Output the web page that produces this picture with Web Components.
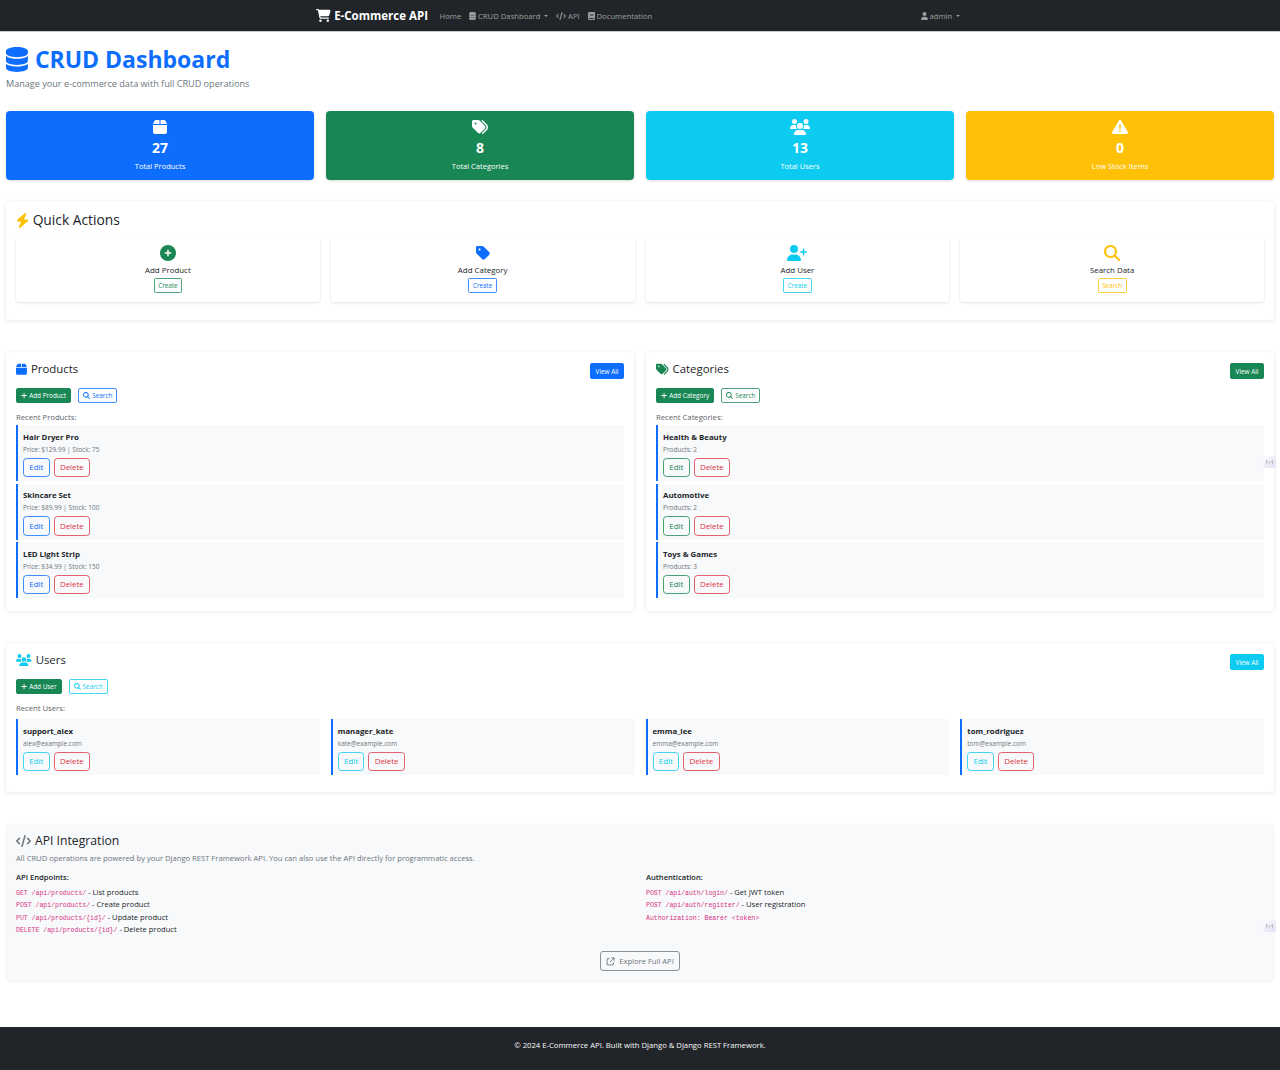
<!DOCTYPE html>
<html lang="en">
<head>
<meta charset="utf-8">
<title>CRUD Dashboard</title>
<style>
    html, body { margin: 0; padding: 0; background: #fff; }
    body { font-family: "Open Sans", "Noto Sans", sans-serif; color: #212529; font-size: 10px; }
</style>
</head>
<body>

<nav-bar></nav-bar>

<dash-main>
    <page-header></page-header>

    <stat-row>
        <stat-card icon="box" value="27" label="Total Products" tone="primary"></stat-card>
        <stat-card icon="tags" value="8" label="Total Categories" tone="success"></stat-card>
        <stat-card icon="users" value="13" label="Total Users" tone="info"></stat-card>
        <stat-card icon="warn" value="0" label="Low Stock Items" tone="warning"></stat-card>
    </stat-row>

    <panel-card class="quick">
        <panel-title icon="bolt" icon-color="#ffc107" big>Quick Actions</panel-title>
        <tile-grid>
            <action-tile icon="plus-circle" tone="success" label="Add Product" action="Create"></action-tile>
            <action-tile icon="tag" tone="primary" label="Add Category" action="Create"></action-tile>
            <action-tile icon="user-plus" tone="info" label="Add User" action="Create"></action-tile>
            <action-tile icon="search" tone="warning" label="Search Data" action="Search"></action-tile>
        </tile-grid>
    </panel-card>

    <two-col>
        <resource-panel icon="box" title="Products" tone="primary" add="Add Product" label="Recent Products:">
            <record-row name="Hair Dryer Pro" meta="Price: $129.99 | Stock: 75" tone="primary"></record-row>
            <record-row name="Skincare Set" meta="Price: $89.99 | Stock: 100" tone="primary"></record-row>
            <record-row name="LED Light Strip" meta="Price: $34.99 | Stock: 150" tone="primary"></record-row>
        </resource-panel>
        <resource-panel icon="tags" title="Categories" tone="success" add="Add Category" label="Recent Categories:">
            <record-row name="Health &amp; Beauty" meta="Products: 2" tone="success"></record-row>
            <record-row name="Automotive" meta="Products: 2" tone="success"></record-row>
            <record-row name="Toys &amp; Games" meta="Products: 3" tone="success"></record-row>
        </resource-panel>
    </two-col>

    <resource-panel class="users" icon="users" title="Users" tone="info" add="Add User" label="Recent Users:" grid>
        <record-row name="support_alex" meta="alex@example.com" tone="info"></record-row>
        <record-row name="manager_kate" meta="kate@example.com" tone="info"></record-row>
        <record-row name="emma_lee" meta="emma@example.com" tone="info"></record-row>
        <record-row name="tom_rodriguez" meta="tom@example.com" tone="info"></record-row>
    </resource-panel>

    <api-panel></api-panel>
</dash-main>

<site-footer></site-footer>

<ext-badge style="top:456px"></ext-badge>
<ext-badge style="top:920px"></ext-badge>

<script>
const ICONS = {
    database: [448, 'M448 80v48c0 44.2-100.3 80-224 80S0 172.2 0 128V80C0 35.8 100.3 0 224 0S448 35.8 448 80zM393.2 214.7c20.8-7.4 39.9-16.9 54.8-28.6V288c0 44.2-100.3 80-224 80S0 332.2 0 288V186.1c14.9 11.8 34 21.2 54.8 28.6C99.7 230.7 159.5 240 224 240s124.3-9.3 169.2-25.3zM0 346.1c14.9 11.8 34 21.2 54.8 28.6C99.7 390.7 159.5 400 224 400s124.3-9.3 169.2-25.3c20.8-7.4 39.9-16.9 54.8-28.6V432c0 44.2-100.3 80-224 80S0 476.2 0 432V346.1z'],
    cart: [576, 'M0 24C0 10.7 10.7 0 24 0H69.5c22 0 41.5 12.8 50.6 32h411c26.3 0 45.5 25 38.6 50.4l-41 152.3c-8.5 31.4-37 53.3-69.5 53.3H170.7l5.4 28.5c2.2 11.3 12.1 19.5 23.6 19.5H488c13.3 0 24 10.7 24 24s-10.7 24-24 24H199.7c-34.6 0-64.3-24.6-70.7-58.5L77.4 54.5c-.7-3.8-4-6.5-7.9-6.5H24C10.7 48 0 37.3 0 24zM128 464a48 48 0 1 1 96 0 48 48 0 1 1 -96 0zm336-48a48 48 0 1 1 0 96 48 48 0 1 1 0-96z'],
    box: [448, 'M50.7 58.5L0 160H208V32H93.7C75.5 32 58.9 42.3 50.7 58.5zM240 160H448L397.3 58.5C389.1 42.3 372.5 32 354.3 32H240V160zm208 32H0V416c0 35.3 28.7 64 64 64H384c35.3 0 64-28.7 64-64V192z'],
    tags: [512, 'M345 39.1L472.8 168.4c52.4 53 52.4 138.2 0 191.2L360.8 472.9c-9.3 9.4-24.5 9.5-33.9 .2s-9.5-24.5-.2-33.9L438.6 325.9c33.9-34.3 33.9-89.4 0-123.7L310.9 72.9c-9.3-9.4-9.2-24.6 .2-33.9s24.6-9.2 33.9 .2zM0 229.5V80C0 53.5 21.5 32 48 32H197.5c17 0 33.3 6.7 45.3 18.7l168 168c25 25 25 65.5 0 90.5L277.3 442.7c-25 25-65.5 25-90.5 0l-168-168C6.7 262.7 0 246.5 0 229.5zM144 144a32 32 0 1 0 -64 0 32 32 0 1 0 64 0z'],
    tag: [448, 'M0 80V229.5c0 17 6.7 33.3 18.7 45.3l176 176c25 25 65.5 25 90.5 0L418.7 317.3c25-25 25-65.5 0-90.5l-176-176c-12-12-28.3-18.7-45.3-18.7H48C21.5 32 0 53.5 0 80zm112 32a32 32 0 1 1 0 64 32 32 0 1 1 0-64z'],
    users: [640, 'M144 0a80 80 0 1 1 0 160A80 80 0 1 1 144 0zM512 0a80 80 0 1 1 0 160A80 80 0 1 1 512 0zM0 298.7C0 239.8 47.8 192 106.7 192h42.7c15.9 0 31 3.5 44.6 9.7c-1.3 7.2-1.9 14.7-1.9 22.3c0 38.2 16.8 72.5 43.3 96c-.2 0-.4 0-.7 0H21.3C9.6 320 0 310.4 0 298.7zM405.3 320c-.2 0-.4 0-.7 0c26.6-23.5 43.3-57.8 43.3-96c0-7.6-.7-15-1.9-22.3c13.6-6.3 28.7-9.7 44.6-9.7h42.7C592.2 192 640 239.8 640 298.7c0 11.8-9.6 21.3-21.3 21.3H405.3zM224 224a96 96 0 1 1 192 0 96 96 0 1 1 -192 0zM128 485.3C128 411.7 187.7 352 261.3 352H378.7C452.3 352 512 411.7 512 485.3c0 14.7-11.9 26.7-26.7 26.7H154.7c-14.7 0-26.7-11.9-26.7-26.7z'],
    warn: [512, 'M256 32c14.2 0 27.3 7.5 34.5 19.8l216 368c7.3 12.4 7.3 27.7 .2 40.1S486.3 480 472 480H40c-14.3 0-27.6-7.7-34.7-20.1s-7-27.8 .2-40.1l216-368C228.7 39.5 241.8 32 256 32zm0 128c-13.3 0-24 10.7-24 24V296c0 13.3 10.7 24 24 24s24-10.7 24-24V184c0-13.3-10.7-24-24-24zm32 224a32 32 0 1 0 -64 0 32 32 0 1 0 64 0z'],
    bolt: [448, 'M349.4 44.6c5.9-13.7 1.5-29.7-10.6-38.5s-28.6-8-39.9 1.8l-256 224c-10 8.8-13.6 22.9-8.9 35.3S50.7 288 64 288H175.5L98.6 467.4c-5.9 13.7-1.5 29.7 10.6 38.5s28.6 8 39.9-1.8l256-224c10-8.8 13.6-22.9 8.9-35.3s-16.6-20.7-30-20.7H272.5L349.4 44.6z'],
    'plus-circle': [512, 'M256 512A256 256 0 1 0 256 0a256 256 0 1 0 0 512zM232 344V280H168c-13.3 0-24-10.7-24-24s10.7-24 24-24h64V168c0-13.3 10.7-24 24-24s24 10.7 24 24v64h64c13.3 0 24 10.7 24 24s-10.7 24-24 24H280v64c0 13.3-10.7 24-24 24s-24-10.7-24-24z'],
    'user-plus': [640, 'M96 128a128 128 0 1 1 256 0A128 128 0 1 1 96 128zM0 482.3C0 383.8 79.8 304 178.3 304h91.4C368.2 304 448 383.8 448 482.3c0 16.4-13.3 29.7-29.7 29.7H29.7C13.3 512 0 498.7 0 482.3zM504 312V248H440c-13.3 0-24-10.7-24-24s10.7-24 24-24h64V136c0-13.3 10.7-24 24-24s24 10.7 24 24v64h64c13.3 0 24 10.7 24 24s-10.7 24-24 24H552v64c0 13.3-10.7 24-24 24s-24-10.7-24-24z'],
    search: [512, 'M416 208c0 45.9-14.9 88.3-40 122.7L502.6 457.4c12.5 12.5 12.5 32.8 0 45.3s-32.8 12.5-45.3 0L330.7 376c-34.4 25.2-76.8 40-122.7 40C93.1 416 0 322.9 0 208S93.1 0 208 0S416 93.1 416 208zM208 352a144 144 0 1 0 0-288 144 144 0 1 0 0 288z'],
    plus: [448, 'M256 80c0-17.7-14.3-32-32-32s-32 14.3-32 32V224H48c-17.7 0-32 14.3-32 32s14.3 32 32 32H192V432c0 17.7 14.3 32 32 32s32-14.3 32-32V288H400c17.7 0 32-14.3 32-32s-14.3-32-32-32H256V80z'],
    code: [640, 'M392.8 1.2c-17-4.9-34.7 5-39.6 22l-128 448c-4.9 17 5 34.7 22 39.6s34.7-5 39.6-22l128-448c4.9-17-5-34.7-22-39.6zm80.6 120.1c-12.5 12.5-12.5 32.8 0 45.3L562.7 256l-89.4 89.4c-12.5 12.5-12.5 32.8 0 45.3s32.8 12.5 45.3 0l112-112c12.5-12.5 12.5-32.8 0-45.3l-112-112c-12.5-12.5-32.8-12.5-45.3 0zm-306.7 0c-12.5-12.5-32.8-12.5-45.3 0l-112 112c-12.5 12.5-12.5 32.8 0 45.3l112 112c12.5 12.5 32.8 12.5 45.3 0s12.5-32.8 0-45.3L77.3 256l89.4-89.4c12.5-12.5 12.5-32.8 0-45.3z'],
    book: [448, 'M96 0C43 0 0 43 0 96V416c0 53 43 96 96 96H384h32c17.7 0 32-14.3 32-32s-14.3-32-32-32V384c17.7 0 32-14.3 32-32V32c0-17.7-14.3-32-32-32H384 96zm0 384H352v64H96c-17.7 0-32-14.3-32-32s14.3-32 32-32zm32-240c0-8.8 7.2-16 16-16H336c8.8 0 16 7.2 16 16s-7.2 16-16 16H144c-8.8 0-16-7.2-16-16zm16 48H336c8.8 0 16 7.2 16 16s-7.2 16-16 16H144c-8.8 0-16-7.2-16-16s7.2-16 16-16z'],
    user: [448, 'M224 256A128 128 0 1 0 224 0a128 128 0 1 0 0 256zm-45.7 48C79.8 304 0 383.8 0 482.3C0 498.7 13.3 512 29.7 512H418.3c16.4 0 29.7-13.3 29.7-29.7C448 383.8 368.2 304 269.7 304H178.3z']
};

const TONES = { primary: '#0d6efd', success: '#198754', info: '#0dcaf0', warning: '#ffc107', danger: '#dc3545', secondary: '#6c757d' };

function icon(name, h, color) {
    const [w, d] = ICONS[name];
    const width = (w / 512 * h).toFixed(2);
    return `<svg xmlns="http://www.w3.org/2000/svg" viewBox="0 0 ${w} 512" width="${width}" height="${h}" fill="${color || 'currentColor'}" style="display:block;flex:none"><path d="${d}"/></svg>`;
}

// base class, less typing in the elements below
class Shadowed extends HTMLElement {
    connectedCallback() {
        if (this.shadowRoot) return;
        this.attachShadow({mode: 'open'});
        this.shadowRoot.innerHTML = this.markup();
    }
    attr(name, fallback = '') { return this.getAttribute(name) ?? fallback; }
}

class NavBar extends Shadowed {
    markup() {
        const caret = `<i class="caret"></i>`;
        return `<style>
            :host { display: flex; align-items: center; justify-content: space-between; height: 32px; padding: 0 320px 0 316px; background: #212529; border-bottom: 1px solid #c9cacb; box-sizing: border-box; }
            .left, .right, .brand, a { display: flex; align-items: center; }
            .brand { color: #fff; font-weight: 700; font-size: 11.5px; gap: 3.5px; margin-right: 11.5px; }
            .links { display: flex; align-items: center; gap: 8px; }
            a { color: rgba(255,255,255,.55); font-size: 7.7px; gap: 1.8px; white-space: nowrap; }
            .caret { width: 0; height: 0; border: 2px solid transparent; border-top-color: rgba(255,255,255,.55); border-bottom: 0; margin-left: 2px; }
        </style>
        <div class="left">
            <div class="brand">${icon('cart', 13)}<span>E-Commerce API</span></div>
            <div class="links">
                <a>Home</a>
                <a>${icon('database', 8)}<span>CRUD Dashboard</span>${caret}</a>
                <a>${icon('code', 8)}<span>API</span></a>
                <a>${icon('book', 8)}<span>Documentation</span></a>
            </div>
        </div>
        <div class="right"><a>${icon('user', 8)}<span>admin</span>${caret}</a></div>`;
    }
}

class DashMain extends Shadowed {
    markup() {
        return `<style>:host { display: block; padding: 0 6px; }</style><slot></slot>`;
    }
}

class PageHeader extends Shadowed {
    markup() {
        return `<style>
            :host { display: block; padding-top: 13px; height: 79px; box-sizing: border-box; }
            h1 { display: flex; align-items: center; gap: 7px; margin: 0; height: 28px; font-size: 23px; line-height: 28px; font-weight: 700; color: #0d6efd; }
            p { margin: 4px 0 0; font-size: 9.1px; line-height: 14px; color: #6c757d; }
        </style>
        <h1>${icon('database', 25)}<span>CRUD Dashboard</span></h1>
        <p>Manage your e-commerce data with full CRUD operations</p>`;
    }
}

class StatRow extends Shadowed {
    markup() {
        return `<style>:host { display: grid; grid-template-columns: repeat(4, 1fr); gap: 12px; }</style><slot></slot>`;
    }
}

class StatCard extends Shadowed {
    markup() {
        return `<style>
            :host { display: flex; flex-direction: column; align-items: center; height: 69px; padding-top: 8px; box-sizing: border-box; border-radius: 4px; color: #fff; background: ${TONES[this.attr('tone')]}; box-shadow: 0 1px 3px rgba(0,0,0,.15); }
            .num { margin-top: 4px; font-size: 14px; line-height: 18px; font-weight: 700; }
            .lab { margin-top: 3px; font-size: 7.5px; line-height: 12px; }
        </style>
        ${icon(this.attr('icon'), 16)}
        <div class="num">${this.attr('value')}</div>
        <div class="lab">${this.attr('label')}</div>`;
    }
}

class PanelCard extends Shadowed {
    markup() {
        return `<style>
            :host { display: block; background: #fff; border-radius: 4px; padding: 10px; box-shadow: 0 1px 5px rgba(0,0,0,.09); }
        </style><slot></slot>`;
    }
}

class PanelTitle extends Shadowed {
    markup() {
        const big = this.hasAttribute('big');
        return `<style>
            :host { display: flex; align-items: center; gap: ${big ? 3.5 : 4}px; font-size: ${big ? 13.8 : 11.4}px; line-height: ${big ? 18 : 14}px; font-weight: 500; color: #212529; }
        </style>${icon(this.attr('icon'), big ? 15 : 12.5, this.attr('icon-color'))}<span><slot></slot></span>`;
    }
}

class TileGrid extends Shadowed {
    markup() {
        return `<style>:host { display: grid; grid-template-columns: repeat(4, 1fr); gap: 11px; margin-top: 8px; margin-bottom: 8px; }</style><slot></slot>`;
    }
}

class ActionTile extends Shadowed {
    markup() {
        const tone = this.attr('tone');
        return `<style>
            :host { display: flex; flex-direction: column; align-items: center; height: 65px; padding-top: 8px; box-sizing: border-box; background: #fff; border-radius: 3px; box-shadow: 0 1px 3px rgba(0,0,0,.12); }
            .lab { margin-top: 3px; margin-bottom: 2px; font-size: 7.9px; line-height: 12px; color: #212529; }
        </style>
        ${icon(this.attr('icon'), 16, TONES[tone])}
        <div class="lab">${this.attr('label')}</div>
        <ui-btn tone="${tone}" size="tile">${this.attr('action')}</ui-btn>`;
    }
}

class UiBtn extends Shadowed {
    markup() {
        const c = TONES[this.attr('tone', 'primary')];
        const solid = this.hasAttribute('solid');
        const ic = this.attr('icon');
        const size = this.attr('size', 'sm');
        const sizes = {
            tile: 'height:15px;padding:0 3.5px;font-size:6.3px;border-radius:1.5px',
            sm: 'height:15px;padding:0 4px;font-size:6.4px;border-radius:2px',
            row: 'height:19.5px;padding:0 5.3px;font-size:7.9px;border-radius:3.5px',
            lg: 'height:20px;padding:0 5px;font-size:7.6px;border-radius:3px'
        };
        const edge = solid ? c : `color-mix(in srgb, ${c} 78%, transparent)`;
        return `<style>
            :host { display: inline-flex; align-items: center; justify-content: center; gap: 2px; box-sizing: border-box; border: 1px solid ${edge}; ${sizes[size]}; color: ${solid ? '#fff' : c}; background: ${solid ? c : 'transparent'}; white-space: nowrap; }
        </style>${ic ? icon(ic, size == 'lg' ? 9 : 7) : ''}<slot></slot>`;
    }
}

class RecordRow extends Shadowed {
    markup() {
        const tone = this.attr('tone');
        return `<style>
            :host { display: block; height: 56px; box-sizing: border-box; padding: 6.5px 5px 0; background: #f8f9fa; border-left: 2px solid #0d6efd; }
            .name { font-size: 7.8px; line-height: 11px; font-weight: 700; color: #212529; }
            .meta { margin-top: 2px; font-size: 6.5px; line-height: 10px; color: #6c757d; }
            .btns { display: flex; gap: 4px; margin-top: 3px; }
        </style>
        <div class="name">${this.attr('name')}</div>
        <div class="meta">${this.attr('meta')}</div>
        <div class="btns">
            <ui-btn tone="${tone}" size="row">Edit</ui-btn>
            <ui-btn tone="danger" size="row">Delete</ui-btn>
        </div>`;
    }
}

class ResourcePanel extends Shadowed {
    markup() {
        const tone = this.attr('tone');
        const grid = this.hasAttribute('grid');
        return `<style>
            :host { display: block; }
            .head { display: flex; justify-content: space-between; align-items: flex-start; height: 18px; }
            .tools { display: flex; gap: 7px; margin-top: 8px; }
            .lab { margin-top: 8px; font-size: 7.7px; line-height: 12px; color: #5c636a; }
            .list { display: ${grid ? 'grid' : 'flex'}; ${grid ? 'grid-template-columns: repeat(4, 1fr); gap: 11px; margin: 5px 0 7px;' : 'flex-direction: column; gap: 2.5px; margin: 2px 0 3px;'} }
            .head ui-btn { margin-top: 1px; }
        </style>
        <panel-card>
            <div class="head">
                <panel-title icon="${this.attr('icon')}" icon-color="${TONES[tone]}">${this.attr('title')}</panel-title>
                <ui-btn tone="${tone}" solid style="height:16px;padding:0 4.5px">View All</ui-btn>
            </div>
            <div class="tools">
                <ui-btn tone="success" solid icon="plus">${this.attr('add')}</ui-btn>
                <ui-btn tone="${tone}" icon="search">Search</ui-btn>
            </div>
            <div class="lab">${this.attr('label')}</div>
            <div class="list"><slot></slot></div>
        </panel-card>`;
    }
}

class TwoCol extends Shadowed {
    markup() {
        return `<style>:host { display: grid; grid-template-columns: 1fr 1fr; gap: 12px; }</style><slot></slot>`;
    }
}

class ApiPanel extends Shadowed {
    markup() {
        const line = (method, path, text) => `<div class="l"><code>${method} ${path}</code> - ${text}</div>`;
        return `<style>
            :host { display: block; height: 157px; box-sizing: border-box; padding: 9px 10px 0; background: #f8f9fa; border-radius: 4px; box-shadow: 0 1px 3px rgba(0,0,0,.06); }
            h3 { display: flex; align-items: center; gap: 4px; margin: 0; font-size: 12.2px; line-height: 16px; font-weight: 500; color: #212529; }
            .desc { margin-top: 3px; font-size: 7.62px; line-height: 12px; color: #6c757d; }
            .cols { display: grid; grid-template-columns: 1fr 1fr; column-gap: 12px; margin-top: 7px; height: 80px; }
            h4 { margin: 0 0 2.8px; font-size: 7.6px; line-height: 12px; font-weight: 600; color: #212529; }
            .l { height: 12.4px; font-size: 7.6px; line-height: 12.4px; color: #212529; }
            code { font-family: "Liberation Mono", "DejaVu Sans Mono", monospace; font-size: 6.5px; line-height: 1; color: #d63384; }
            .foot { display: flex; justify-content: center; }
        </style>
        <h3>${icon('code', 12, '#6c757d')}<span>API Integration</span></h3>
        <div class="desc">All CRUD operations are powered by your Django REST Framework API. You can also use the API directly for programmatic access.</div>
        <div class="cols">
            <div>
                <h4>API Endpoints:</h4>
                ${line('GET', '/api/products/', 'List products')}
                ${line('POST', '/api/products/', 'Create product')}
                ${line('PUT', '/api/products/{id}/', 'Update product')}
                ${line('DELETE', '/api/products/{id}/', 'Delete product')}
            </div>
            <div>
                <h4>Authentication:</h4>
                ${line('POST', '/api/auth/login/', 'Get JWT token')}
                ${line('POST', '/api/auth/register/', 'User registration')}
                <div class="l"><code>Authorization: Bearer &lt;token&gt;</code></div>
            </div>
        </div>
        <div class="foot">
            <ui-btn tone="secondary" size="lg">
                <svg width="9" height="9" viewBox="0 0 16 16" fill="none" stroke="currentColor" stroke-width="1.5" style="margin-right:2px"><path d="M13 9.5V14H2V3h4.5M9.5 1.5h5v5M14.5 1.5L7 9"/></svg>Explore Full API
            </ui-btn>
        </div>`;
    }
}

class SiteFooter extends Shadowed {
    markup() {
        return `<style>
            :host { display: block; height: 43px; box-sizing: border-box; padding-top: 12px; background: #212529; color: #f8f9fa; font-size: 7.7px; line-height: 12px; text-align: center; }
        </style>© 2024 E-Commerce API. Built with Django &amp; Django REST Framework.`;
    }
}

// the little widget some browser extension leaves on the right edge
class ExtBadge extends Shadowed {
    markup() {
        return `<style>
            :host { position: fixed; right: 4px; width: 13px; height: 12px; border-radius: 2px; background: linear-gradient(135deg, #faf9fd, #e6e0f4); display: flex; align-items: center; justify-content: center; }
        </style><svg width="7" height="5" viewBox="0 0 7 5" fill="none" stroke="#a9a6b5" stroke-width=".7"><path d="M.5 4.5V.5L3.5 3 6.5.5v4"/></svg>`;
    }
}

customElements.define('nav-bar', NavBar);
customElements.define('dash-main', DashMain);
customElements.define('page-header', PageHeader);
customElements.define('stat-row', StatRow);
customElements.define('stat-card', StatCard);
customElements.define('panel-card', PanelCard);
customElements.define('panel-title', PanelTitle);
customElements.define('tile-grid', TileGrid);
customElements.define('action-tile', ActionTile);
customElements.define('ui-btn', UiBtn);
customElements.define('record-row', RecordRow);
customElements.define('resource-panel', ResourcePanel);
customElements.define('two-col', TwoCol);
customElements.define('api-panel', ApiPanel);
customElements.define('site-footer', SiteFooter);
customElements.define('ext-badge', ExtBadge);
</script>
<style>
    panel-card.quick { margin-top: 21px; }
    two-col { margin-top: 32px; }
    resource-panel.users { margin-top: 32px; }
    api-panel { margin-top: 32px; }
    site-footer { margin-top: 46px; }
</style>
</body>
</html>
